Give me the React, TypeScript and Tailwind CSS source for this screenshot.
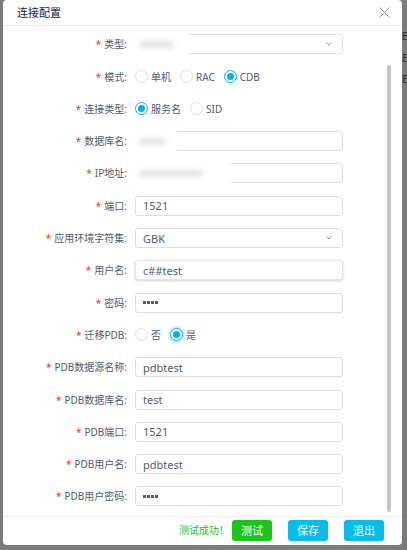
import React from 'react';

type Field = {
  label: string;
  kind: 'input' | 'select' | 'radio' | 'password';
  value?: string;
  options?: string[];
  checked?: number;
  redact?: number;
  hovered?: boolean;
  focusRing?: boolean;
};

const fields: Field[] = [
  { label: '类型', kind: 'select', value: '', redact: 56 },
  { label: '模式', kind: 'radio', options: ['单机', 'RAC', 'CDB'], checked: 2 },
  { label: '连接类型', kind: 'radio', options: ['服务名', 'SID'], checked: 0 },
  { label: '数据库名', kind: 'input', value: '', redact: 44 },
  { label: 'IP地址', kind: 'input', value: '', redact: 98 },
  { label: '端口', kind: 'input', value: '1521' },
  { label: '应用环境字符集', kind: 'select', value: 'GBK' },
  { label: '用户名', kind: 'input', value: 'c##test', hovered: true },
  { label: '密码', kind: 'password' },
  { label: '迁移PDB', kind: 'radio', options: ['否', '是'], checked: 1, focusRing: true },
  { label: 'PDB数据源名称', kind: 'input', value: 'pdbtest' },
  { label: 'PDB数据库名', kind: 'input', value: 'test' },
  { label: 'PDB端口', kind: 'input', value: '1521' },
  { label: 'PDB用户名', kind: 'input', value: 'pdbtest' },
  { label: 'PDB用户密码', kind: 'password' },
];

const Redaction: React.FC<{ width: number }> = ({ width }) => (
  <div
    className="absolute -left-[3px] -top-[3px] h-[27px] bg-white blur-[1.5px] flex items-start pl-[6px] pt-[9px]"
    style={{ width }}
  >
    <div className="h-[7px] w-[70%] rounded-full bg-[#e4e4e4] blur-[2px]" />
  </div>
);

const TextBox: React.FC<{ field: Field }> = ({ field }) => (
  <div
    className={
      'relative w-[208px] h-[20px] rounded-[3px] border bg-white flex items-center pl-[7px] pr-[10px] text-[11px] text-[#515a6e] ' +
      (field.hovered ? 'border-[#e3e5e8] shadow-[0_1px_3px_rgba(0,0,0,0.18)]' : 'border-[#dcdee2]')
    }
  >
    {field.kind === 'password' ? (
      <div className="flex gap-[1px]">
        <span className="w-[3px] h-[3px] bg-[#515a6e]" />
        <span className="w-[3px] h-[3px] bg-[#515a6e]" />
        <span className="w-[3px] h-[3px] bg-[#515a6e]" />
        <span className="w-[3px] h-[3px] bg-[#515a6e]" />
      </div>
    ) : (
      <span className="flex-1 leading-none">{field.value}</span>
    )}
    {field.kind === 'select' && (
      <svg width="6" height="4" viewBox="0 0 6 4" className="ml-auto">
        <path d="M0.5 0.5 L3 3 L5.5 0.5" fill="none" stroke="#808695" strokeWidth="0.9" />
      </svg>
    )}
    {field.redact && <Redaction width={field.redact} />}
  </div>
);

const Radios: React.FC<{ field: Field }> = ({ field }) => (
  <div className="flex items-center h-[20px] text-[10px] text-[#515a6e]">
    {field.options!.map((opt, i) => {
      const on = i === field.checked;
      return (
        <div key={opt} className="flex items-center mr-[9px]">
          <span
            className={
              'w-[13px] h-[13px] rounded-full bg-white flex items-center justify-center ' +
              (on
                ? 'border-[1.5px] border-[#00b3ef]' + (field.focusRing ? ' shadow-[0_0_0_2px_rgba(0,179,239,0.2)]' : '')
                : 'border border-[#dcdee2]')
            }
          >
            {on && <span className="w-[7px] h-[7px] rounded-full bg-[#00b3ef]" />}
          </span>
          <span className="ml-[3px] leading-none">{opt}</span>
        </div>
      );
    })}
  </div>
);

export default function App() {
  return (
    <div className="w-[407px] h-[550px] bg-[#7b7b7b] flex overflow-hidden font-['Noto_Sans','Noto_Sans_CJK_SC',sans-serif]">
      <div className="w-[3px] shrink-0" />
      <div className="w-[399px] h-[545px] shrink-0 bg-white rounded-[4px] flex flex-col">
        {/* header */}
        <div className="h-[26px] shrink-0 border-b border-[#e8eaec] flex items-center justify-between pl-[14px] pr-[12px]">
          <span className="text-[11px] text-[#17233d] leading-none">连接配置</span>
          <svg width="11" height="11" viewBox="0 0 11 11">
            <path d="M0.5 0.5 L10.5 10.5 M10.5 0.5 L0.5 10.5" stroke="#999" strokeWidth="1" />
          </svg>
        </div>

        {/* body */}
        <div className="flex-1 flex">
          <div className="flex flex-col gap-[12.3px] pt-[8.3px]">
            {fields.map((f) => (
              <div key={f.label} className="flex items-center h-[20px]">
                <div className="w-[124px] flex justify-end items-center text-[10px] text-[#515a6e] leading-none">
                  <span className="text-[#ed4014] mr-[3px] text-[10px]">*</span>
                  <span>{f.label}:</span>
                </div>
                <div className="ml-[8px]">
                  {f.kind === 'radio' ? <Radios field={f} /> : <TextBox field={f} />}
                </div>
              </div>
            ))}
          </div>
          <div className="ml-auto mr-[11px] w-[4px]">
            <div className="mt-[39px] h-[447px] w-[4px] rounded-full bg-[#c6c6c6]" />
          </div>
        </div>

        {/* footer */}
        <div className="h-[29px] shrink-0 border-t border-[#e8eaec] flex items-start justify-end pt-[3px] pr-[18px]">
          <span className="text-[10px] text-[#19be1b] leading-[21px] mr-[3px]">测试成功！</span>
          <button className="w-[40px] h-[21px] rounded-[3px] bg-[#1cc51c] text-white text-[11px] leading-none">测试</button>
          <button className="ml-[16px] w-[40px] h-[21px] rounded-[3px] bg-[#07bbea] text-white text-[11px] leading-none">保存</button>
          <button className="ml-[16px] w-[40px] h-[21px] rounded-[3px] bg-[#07bbea] text-white text-[11px] leading-none">退出</button>
        </div>
      </div>
      <div className="flex-1 flex flex-col pt-[25px] text-[11px] leading-[21.5px] text-[#2e2e2e] overflow-hidden">
        <span>E</span>
        <span>E</span>
        <span>E</span>
      </div>
    </div>
  );
}
